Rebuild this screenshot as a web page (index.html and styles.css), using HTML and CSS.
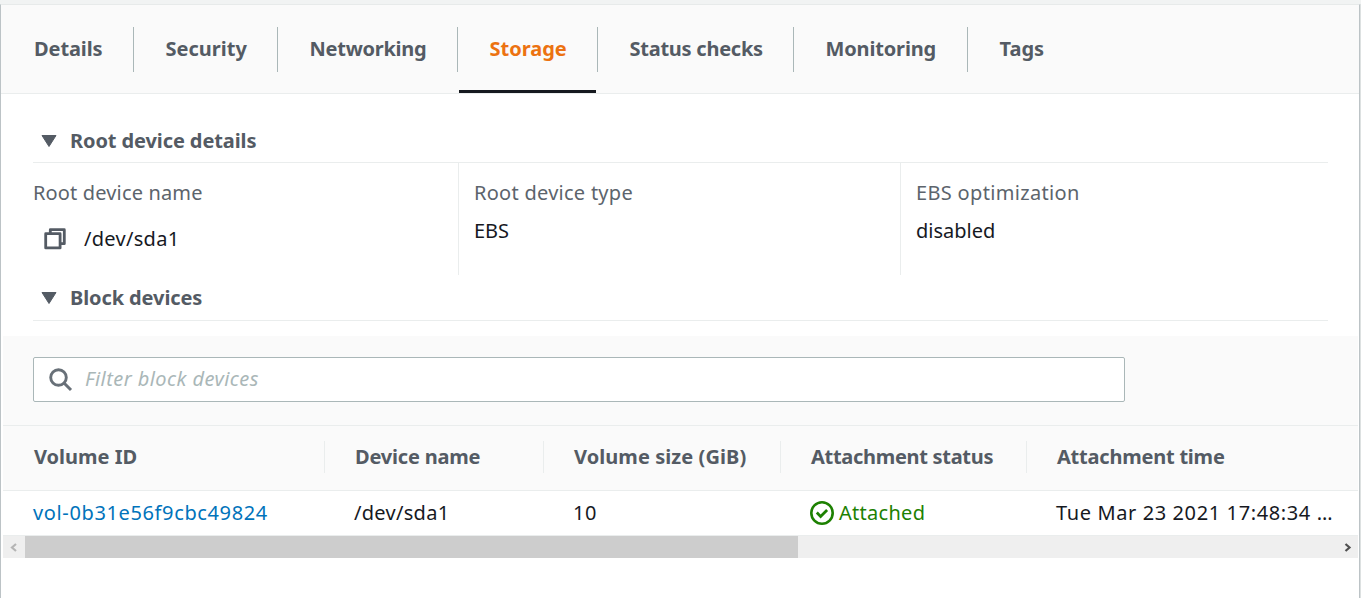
FILE: index.html
```html
<!DOCTYPE html>
<html lang="en">
<head>
<meta charset="utf-8">
<title>Instance storage</title>
<link rel="stylesheet" href="styles.css">
</head>
<body>
<main class="panel">
  <nav class="tabs">
    <a class="tab tab-details"><span>Details</span></a>
    <a class="tab tab-security"><span>Security</span></a>
    <a class="tab tab-networking"><span>Networking</span></a>
    <a class="tab tab-storage active"><span>Storage</span></a>
    <a class="tab tab-status"><span>Status checks</span></a>
    <a class="tab tab-monitoring"><span>Monitoring</span></a>
    <a class="tab tab-tags"><span>Tags</span></a>
  </nav>
  <section class="content">
    <h2 class="heading root-heading"><svg class="caret" viewBox="0 0 16 12"><path d="M1 .5h14L8 11.5z" fill="currentColor" stroke="currentColor" stroke-linejoin="round"/></svg><span>Root device details</span></h2>
    <div class="details">
      <div class="detail">
        <div class="label root-name">Root device name</div>
        <div class="value copyable"><svg class="copy" viewBox="0 0 22 22"><path d="M6.3 5.5V1.7h14v14h-4M1.7 5.7h14.4v14.2H1.7z" fill="none" stroke="currentColor" stroke-width="2.8" stroke-linejoin="round"/></svg><span class="path">/dev/sda1</span></div>
      </div>
      <div class="detail">
        <div class="label root-type">Root device type</div>
        <div class="value ebs">EBS</div>
      </div>
      <div class="detail">
        <div class="label ebs-opt">EBS optimization</div>
        <div class="value disabled">disabled</div>
      </div>
    </div>
    <h2 class="heading block-heading"><svg class="caret" viewBox="0 0 16 12"><path d="M1 .5h14L8 11.5z" fill="currentColor" stroke="currentColor" stroke-linejoin="round"/></svg><span>Block devices</span></h2>
  </section>
  <section class="table">
    <div class="filter">
      <div class="search"><svg class="lens" viewBox="0 0 24 24"><circle cx="9.5" cy="9.5" r="7.8" fill="none" stroke="currentColor" stroke-width="2.9"/><path d="M15 15l7 7" stroke="currentColor" stroke-width="3"/></svg><span class="placeholder">Filter block devices</span></div>
    </div>
    <div class="row head">
      <div class="cell h-volume">Volume ID</div>
      <div class="cell h-device">Device name</div>
      <div class="cell h-size">Volume size (GiB)</div>
      <div class="cell h-status">Attachment status</div>
      <div class="cell h-time">Attachment time</div>
    </div>
    <div class="row body">
      <div class="cell link">vol-0b31e56f9cbc49824</div>
      <div class="cell path">/dev/sda1</div>
      <div class="cell size">10</div>
      <div class="cell attached"><svg class="check" viewBox="0 0 24 24"><circle cx="12" cy="12" r="10.7" fill="none" stroke="currentColor" stroke-width="2.6"/><path d="M6.8 11.6l3.8 3.8 6.5-6.5" fill="none" stroke="currentColor" stroke-width="2.8"/></svg><span>Attached</span></div>
      <div class="cell time">Tue Mar 23 2021 17:48:34 …</div>
    </div>
    <div class="scrollbar">
      <svg class="arrow left" viewBox="0 0 22 22"><path d="M13 8l-4 3.5 4 3.5" fill="none" stroke="currentColor" stroke-width="2.2"/></svg>
      <div class="thumb"></div>
      <svg class="arrow right" viewBox="0 0 22 22"><path d="M9.5 8l4 3.5-4 3.5" fill="none" stroke="currentColor" stroke-width="2.2"/></svg>
    </div>
  </section>
</main>
</body>
</html>
```
FILE: styles.css
```css
* { box-sizing: border-box; }
body {
  margin: 0;
  padding-top: 4px;
  height: 598px;
  overflow: hidden;
  background: #f1f3f3;
  color: #16191f;
  font: 20px/28px "Noto Sans", sans-serif;
  white-space: nowrap;
}
svg { display: block; flex: none; }
.panel {
  width: 1360px;
  height: 594px;
  background: #fff;
  border: 1px solid #bcc3c6;
  border-top-color: #e7eaea;
  border-bottom: 0;
  box-shadow: 1px 0 #dde1e1;
}
.tabs {
  display: flex;
  height: 89px;
  padding-top: 22px;
  background: #fafafa;
  border-bottom: 1px solid #eaeded;
  color: #545b64;
  font-weight: 700;
}
.tab {
  position: relative;
  height: 45px;
  padding: 8px 0 0 31.5px;
  border-right: 1px solid #aab7b8;
}
.tab-details { width: 133px; padding-left: 33px; letter-spacing: -0.1px; }
.tab-security { width: 144px; }
.tab-networking { width: 180px; letter-spacing: -0.25px; }
.tab-storage { width: 140px; }
.tab-status { width: 196px; letter-spacing: -0.25px; }
.tab-monitoring { width: 174px; letter-spacing: -0.15px; }
.tab-tags { border: 0; }
.active { color: #ec7211; }
.active::after {
  content: "";
  position: absolute;
  left: 1px;
  right: 1px;
  top: 63px;
  height: 3px;
  background: #16191f;
}
.content { padding: 0 31px 0 32px; height: 242px; }
.heading {
  display: flex;
  align-items: center;
  margin: 0;
  padding-left: 8px;
  color: #545b64;
  font-size: 20px;
  font-weight: 700;
  letter-spacing: -0.1px;
  border-bottom: 1px solid #eaeded;
}
.root-heading { height: 69px; padding-top: 25px; }
.block-heading { height: 46px; }
.caret { width: 16px; height: 12px; margin-right: 13px; }
.details {
  display: grid;
  grid-template-columns: 425px 442px 1fr;
  height: 112px;
}
.detail { padding: 16px 0 0 15px; border-left: 1px solid #eaeded; }
.detail:first-child { padding-left: 0; border: 0; }
.label { color: #5c646c; margin-bottom: 10px; letter-spacing: 0.15px; }
.root-type { letter-spacing: 0.27px; }
.ebs-opt { letter-spacing: 0.33px; }
.path { letter-spacing: 0.3px; }
.copyable { display: flex; align-items: center; padding: 8px 0 0 11px; }
.copy { width: 22px; height: 22px; margin-right: 18px; color: #545b64; }
.table { margin: 0 1px 0 2px; }
.filter {
  height: 90px;
  padding: 21px 0 0 30px;
  background: #fafafa;
  border-bottom: 1px solid #eaeded;
}
.search {
  display: flex;
  align-items: center;
  width: 1092px;
  height: 45px;
  padding-left: 15px;
  background: #fff;
  border: 1px solid #aab7b8;
  border-radius: 2px;
  color: #aab7b8;
  font-style: italic;
}
.placeholder { letter-spacing: 0.43px; padding-bottom: 2px; }
.lens { width: 24px; height: 24px; margin-right: 12px; color: #687078; }
.row { display: grid; grid-template-columns: 322px 219px 237px 246px 1fr; }
.head {
  height: 65px;
  padding: 15px 0 17px;
  background: #fafafa;
  border-bottom: 1px solid #eaeded;
  color: #545b64;
  font-weight: 700;
}
.cell { display: flex; align-items: center; padding-left: 29px; }
.cell:first-child { padding-left: 30px; }
.head .cell { padding-left: 30px; border-right: 1px solid #eaeded; }
.head .cell:first-child { padding-left: 31px; }
.head .cell:last-child { border: 0; }
.h-device { letter-spacing: -0.2px; }
.h-size { letter-spacing: 0.07px; }
.h-status { letter-spacing: -0.3px; }
.h-time { letter-spacing: -0.22px; }
.body { height: 45px; border-bottom: 1px solid #eaeded; }
.link { color: #0073bb; letter-spacing: 0.63px; }
.size { letter-spacing: 0.6px; }
.attached { color: #1d8102; letter-spacing: 0.28px; }
.time { letter-spacing: 0.61px; }
.check { width: 24px; height: 24px; margin-right: 5px; }
.scrollbar { display: flex; height: 22px; background: #efefef; }
.arrow { width: 22px; height: 22px; color: #b5b5b5; }
.right { margin-left: auto; color: #505050; }
.thumb { width: 773px; background: #cdcdcd; }
```
